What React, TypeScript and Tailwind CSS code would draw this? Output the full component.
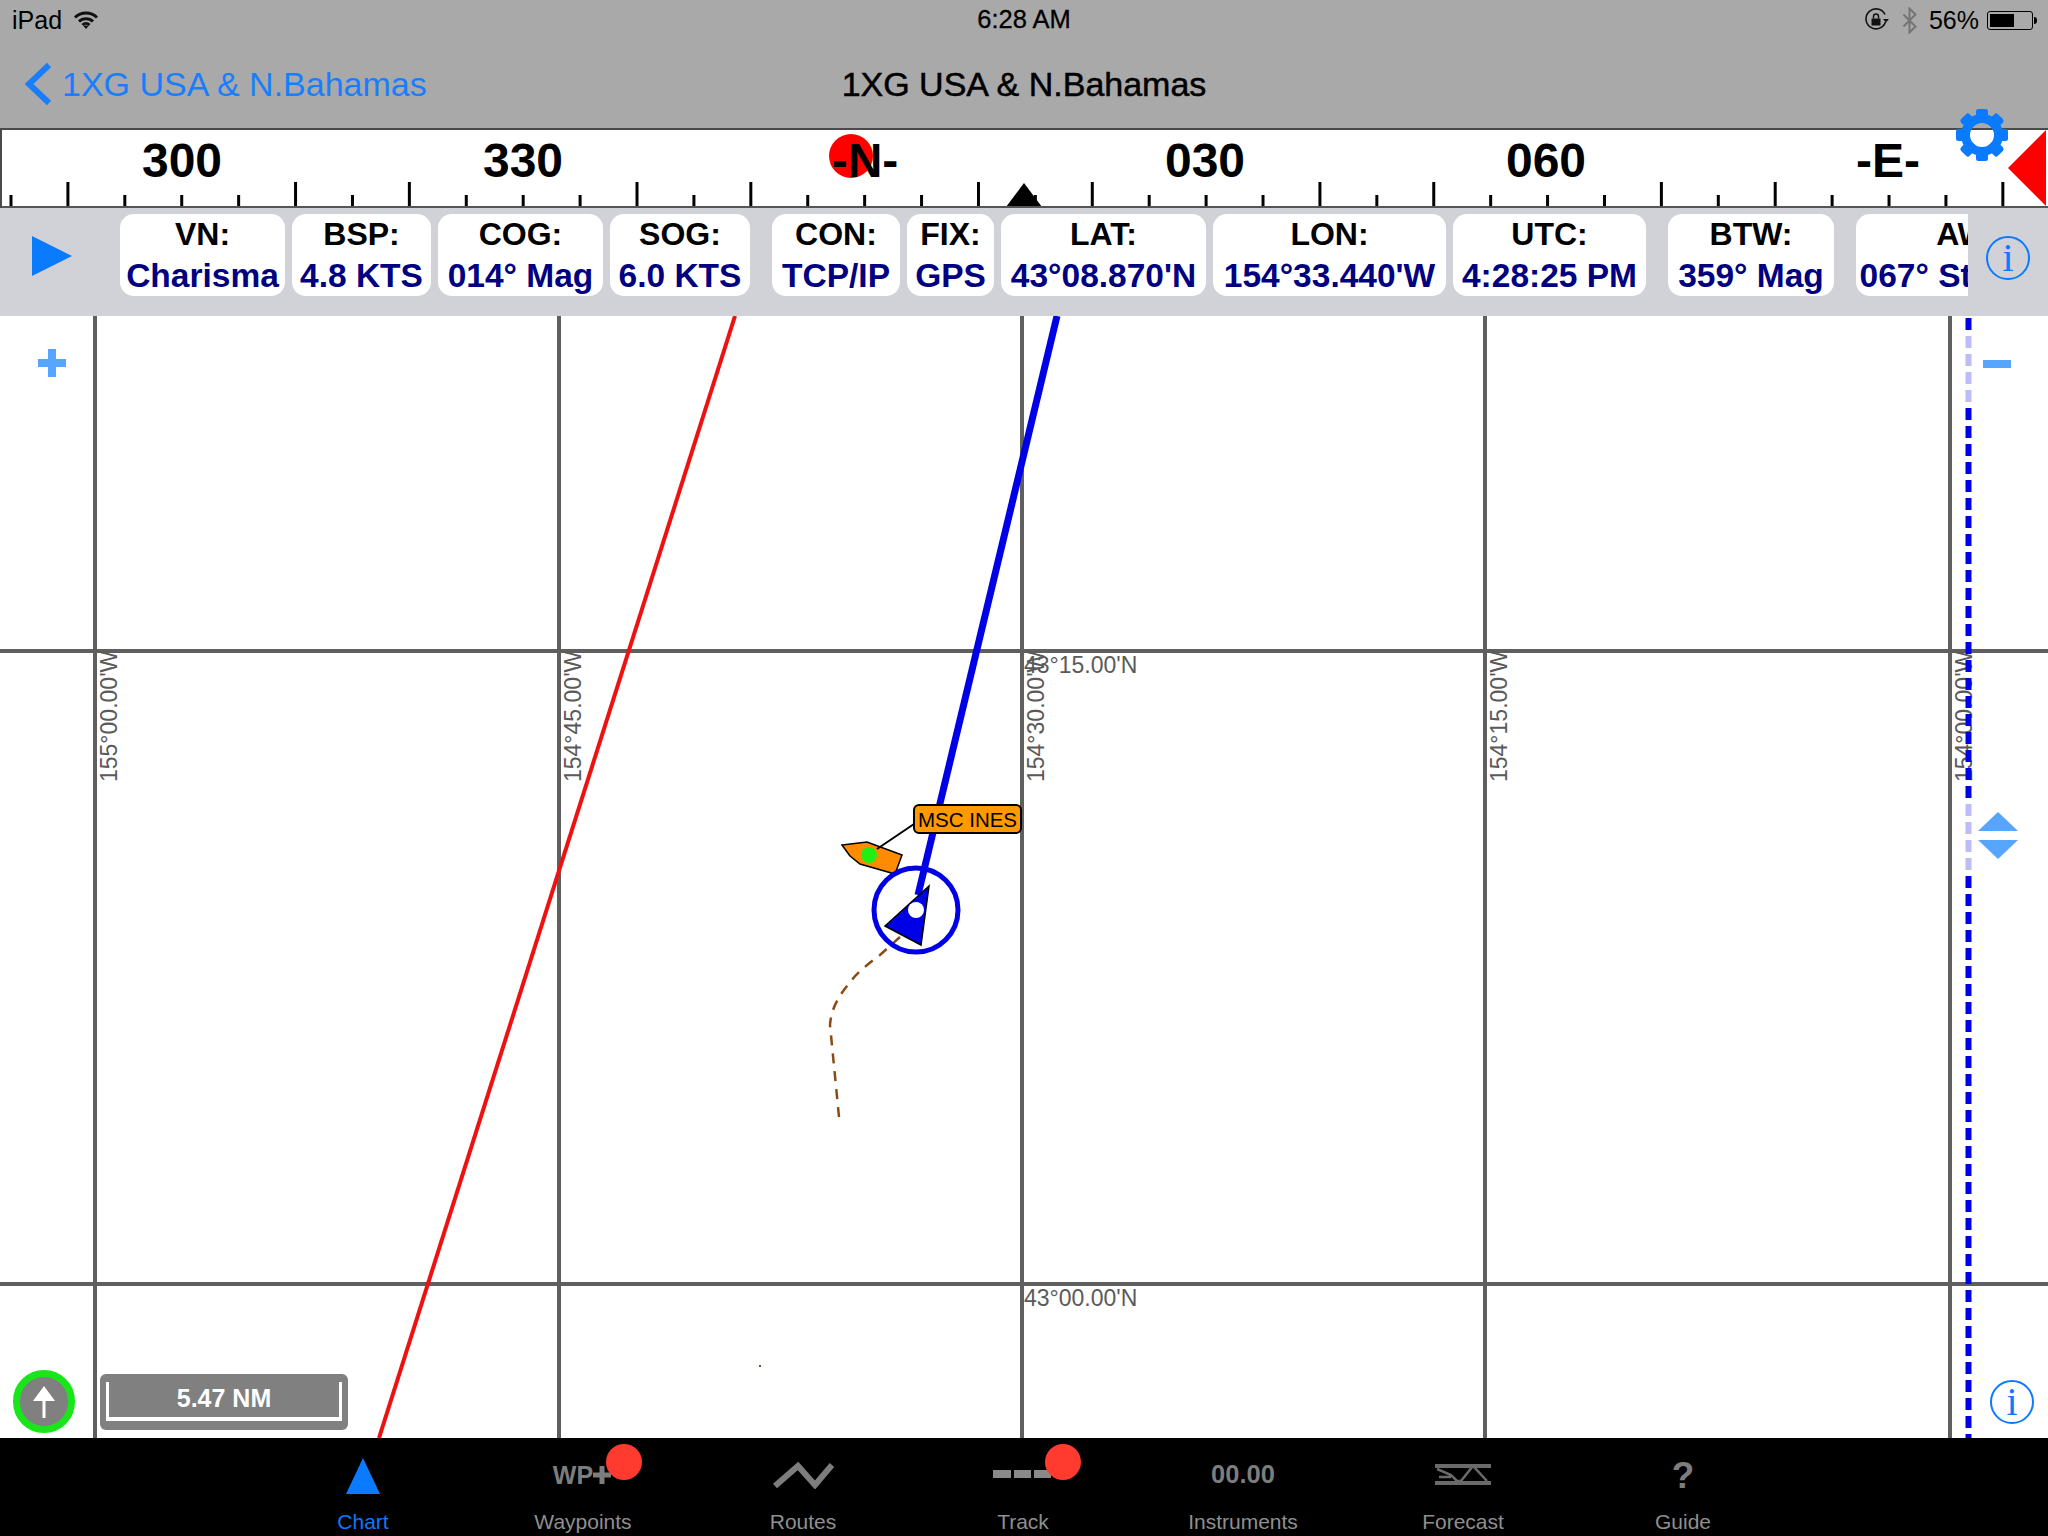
import React from "react";

const instrumentsA = [
  { label: "VN:", value: "Charisma", width: "w-[165px]" },
  { label: "BSP:", value: "4.8 KTS", width: "w-[139px]" },
  { label: "COG:", value: "014° Mag", width: "w-[165px]" },
  { label: "SOG:", value: "6.0 KTS", width: "w-[140px]" },
];

const instrumentsB = [
  { label: "CON:", value: "TCP/IP", width: "w-[128px]" },
  { label: "FIX:", value: "GPS", width: "w-[87px]" },
  { label: "LAT:", value: "43°08.870'N", width: "w-[205px]" },
  { label: "LON:", value: "154°33.440'W", width: "w-[233px]" },
  { label: "UTC:", value: "4:28:25 PM", width: "w-[193px]" },
];

const Card = ({ label, value, width }: { label: string; value: string; width: string }) => (
  <div className={`${width} shrink-0 h-[82px] rounded-[14px] bg-white text-center leading-[41px] font-bold whitespace-nowrap`}>
    <div className="text-black text-[32px]">{label}</div>
    <div className="text-[#000080] text-[33.5px]">{value}</div>
  </div>
);

const InfoIcon = () => (
  <div className="w-[44px] h-[44px] rounded-full border-2 border-[#0a7aff] flex items-center justify-center text-[#0a7aff] text-[40px] leading-none font-['Liberation_Serif',serif]">
    i
  </div>
);

const Compass = () => {
  const ticks = Array.from({ length: 36 }, (_, k) => k);
  const labels = [
    { text: "300", x: 182 },
    { text: "330", x: 523 },
    { text: "-N-", x: 865 },
    { text: "030", x: 1205 },
    { text: "060", x: 1546 },
    { text: "-E-", x: 1888 },
  ];
  return (
    <svg className="block w-full h-[80px] bg-white" viewBox="0 128 2048 80">
      <circle cx="851" cy="156" r="22" fill="#ff0000" />
      {ticks.map((k) => {
        const long = k % 6 === 1 || k % 6 === 5;
        const x = 11 + 56.91 * k;
        return <line key={k} x1={x} x2={x} y1={long ? 182 : 195} y2="207" stroke="#000" strokeWidth="3" />;
      })}
      {labels.map((l) => (
        <text key={l.text} x={l.x} y="177" textAnchor="middle" fontSize="48" fontWeight="700" fill="#000">
          {l.text}
        </text>
      ))}
      <polygon points="1024,183 1006,207 1042,207" fill="#000" />
      <polygon points="2008,168 2046,130 2046,206" fill="#ff0000" />
      <rect x="0" y="128" width="2048" height="2" fill="#4a4a4a" />
      <rect x="0" y="206" width="2048" height="2" fill="#555555" />
      <rect x="0" y="128" width="2" height="80" fill="#4a4a4a" />
    </svg>
  );
};

const Gear = () => (
  <svg className="absolute left-[1954px] top-[107px]" width="56" height="56" viewBox="-28 -28 56 56">
    {[0, 45, 90, 135, 180, 225, 270, 315].map((a) => (
      <rect key={a} x="-6" y="-26" width="12" height="14" rx="2.5" fill="#0a7aff" transform={`rotate(${a})`} />
    ))}
    <circle r="16.5" fill="none" stroke="#0a7aff" strokeWidth="9" />
  </svg>
);

const StatusRight = () => (
  <div className="flex items-center">
    <svg width="26" height="24" viewBox="0 0 26 24" className="mr-[12px]">
      <path d="M21 6.5A10 10 0 1 0 21.5 14" fill="none" stroke="#111" strokeWidth="1.6" />
      <path d="M19 11l3 3.5 3-3.5z" fill="#111" />
      <rect x="7.5" y="10.5" width="9" height="7" fill="#111" />
      <path d="M9.5 10.5V8.5a2.5 2.5 0 0 1 5 0v2" fill="none" stroke="#111" strokeWidth="1.5" />
    </svg>
    <svg width="16" height="27" viewBox="0 0 16 27" className="mr-[11px]">
      <path d="M1.5 7.5l12 12-6 6V1.500l6 6-12 12" fill="none" stroke="#757575" strokeWidth="2" />
    </svg>
    <span className="text-[25px] leading-none text-black mr-[8px]">56%</span>
    <div className="relative w-[46px] h-[19px] rounded-[3px] border border-black p-[2px]">
      <div className="w-[24px] h-full bg-black" />
    </div>
    <div className="ml-[1px] w-[3px] h-[7px] bg-black rounded-r-sm" />
  </div>
);

const ChartDrawing = () => {
  const grid = [95, 559, 1022, 1485, 1950];
  const vLabels = [
    { x: 117, t: "155°00.00'W" },
    { x: 581, t: "154°45.00'W" },
    { x: 1044, t: "154°30.00'W" },
    { x: 1507, t: "154°15.00'W" },
    { x: 1972, t: "154°00.00'W" },
  ];
  const dashes = [
    { y1: 318, y2: 336, c: "#0000e6" },
    { y1: 336, y2: 408, c: "#bcbcf8" },
    { y1: 408, y2: 804, c: "#0000e6" },
    { y1: 804, y2: 876, c: "#bcbcf8" },
    { y1: 876, y2: 1438, c: "#0000e6" },
  ];
  return (
    <svg className="absolute inset-0" width="2048" height="1122" viewBox="0 316 2048 1122">
      {grid.map((x) => (
        <line key={x} x1={x} x2={x} y1="316" y2="1438" stroke="#5f5f5f" strokeWidth="4" />
      ))}
      <line x1="0" x2="2048" y1="651" y2="651" stroke="#5f5f5f" strokeWidth="4" />
      <line x1="0" x2="2048" y1="1284" y2="1284" stroke="#5f5f5f" strokeWidth="4" />

      {vLabels.map((l) => (
        <text key={l.x} transform={`translate(${l.x} 782) rotate(-90)`} fontSize="23" fill="#5a5a5a">
          {l.t}
        </text>
      ))}
      <text x="1024" y="673" fontSize="23" fill="#5a5a5a">43°15.00'N</text>
      <text x="1024" y="1306" fontSize="23" fill="#5a5a5a">43°00.00'N</text>

      <line x1="735" y1="316" x2="379" y2="1438" stroke="#ee1111" strokeWidth="4" />
      <line x1="1057" y1="316" x2="918" y2="895" stroke="#0000e6" strokeWidth="7" />
      {dashes.map((d) => (
        <line key={d.y1} x1="1968.5" x2="1968.5" y1={d.y1} y2={d.y2} stroke={d.c} strokeWidth="6" strokeDasharray="12 6" />
      ))}

      <path
        d="M900 937L880 955C868 964 858 972 851 981C840 994 831 1008 830 1025L839 1117"
        fill="none"
        stroke="#8b4a14"
        strokeWidth="2.5"
        strokeDasharray="10 8"
      />
      <rect x="759" y="1365" width="2" height="2" fill="#8b4a14" />

      <polygon points="842,845 867,842 902,855 895,874 860,864 850,856" fill="#ff8c00" stroke="#000" strokeWidth="1.500" />
      <circle cx="869" cy="855" r="8" fill="#22ee11" />
      <line x1="877" y1="849" x2="914" y2="824" stroke="#000" strokeWidth="2" />
      <rect x="914" y="805" width="107" height="28" rx="5" fill="#ff9900" stroke="#000" strokeWidth="2" />
      <text x="967.5" y="827" textAnchor="middle" fontSize="20.5" fill="#000">MSC INES</text>

      <circle cx="916" cy="910" r="42" fill="none" stroke="#0000e6" strokeWidth="5" />
      <polygon points="929,886 885,926 921,945" fill="#0000e6" stroke="#000" strokeWidth="1.500" />
      <circle cx="916" cy="910" r="8" fill="#fff" />
    </svg>
  );
};

const ChartOverlays = () => (
  <>
    <svg className="absolute left-[38px] top-[33px]" width="28" height="28" viewBox="0 0 28 28">
      <path d="M10 0h8v10h10v8H18v10h-8V18H0v-8h10z" fill="#56a5ff" />
    </svg>
    <div className="absolute left-[1983px] top-[44px] w-[28px] h-[8px] bg-[#56a5ff]" />
    <svg className="absolute left-[1978px] top-[496px]" width="40" height="47" viewBox="0 0 40 47">
      <polygon points="20,0 40,19 0,19" fill="#56a5ff" />
      <polygon points="0,28 40,28 20,47" fill="#56a5ff" />
    </svg>
    <div className="absolute left-[1990px] top-[1064px]">
      <InfoIcon />
    </div>
    <div className="absolute left-[13px] top-[1054px] w-[62px] h-[63px] rounded-full border-[7px] border-[#19e619] bg-[#808080] flex items-center justify-center">
      <svg width="24" height="32" viewBox="0 0 24 32">
        <polygon points="12,0 23,15 1,15" fill="#fff" />
        <rect x="10.500" y="12" width="3" height="20" fill="#fff" />
      </svg>
    </div>
    <div className="absolute left-[100px] top-[1058px] w-[248px] h-[56px] rounded-[6px] bg-[#808080] pt-[8px] px-[6px]">
      <div className="h-[39px] border-x-[3px] border-b-[4px] border-white flex items-center justify-center text-white text-[25px] font-bold pb-[2px]">
        5.47 NM
      </div>
    </div>
  </>
);

const Tab = ({
  label,
  active = false,
  children,
}: {
  label: string;
  active?: boolean;
  children: React.ReactNode;
}) => (
  <div className="relative w-[220px] flex flex-col items-center">
    <div className="h-[70px] flex items-center justify-center">{children}</div>
    <div className={`text-[21px] leading-[24px] ${active ? "text-[#0a7aff]" : "text-[#8f8f8f]"}`}>{label}</div>
  </div>
);

const TabBar = () => (
  <div className="h-[98px] bg-black flex justify-center pt-[2px] pr-[2px]">
    <Tab label="Chart" active>
      <svg width="34" height="36" viewBox="0 0 34 36" className="mt-[1px]">
        <polygon points="17,0 34,36 0,36" fill="#0a7aff" />
      </svg>
    </Tab>
    <Tab label="Waypoints">
      <div className="flex items-center font-bold text-[25px] leading-none text-[#7d7d7d] mr-[2px]">
        WP
        <svg width="18" height="18" viewBox="0 0 18 18">
          <path d="M6.500 0h5v6.500H18v5h-6.500V18h-5v-6.500H0v-5h6.500z" fill="#7d7d7d" />
        </svg>
      </div>
      <div className="absolute left-[133px] top-[4px] w-[36px] h-[36px] rounded-full bg-[#ff3b30]" />
    </Tab>
    <Tab label="Routes">
      <svg width="62" height="28" viewBox="0 0 62 28">
        <polyline points="3,25 26,5 43,24 60,4" fill="none" stroke="#7d7d7d" strokeWidth="6" />
      </svg>
    </Tab>
    <Tab label="Track">
      <div className="flex gap-[3px] mb-[2px] mr-[2px]">
        <div className="w-[18px] h-[8px] bg-[#8a8a8a]" />
        <div className="w-[17px] h-[8px] bg-[#8a8a8a]" />
        <div className="w-[17px] h-[8px] bg-[#8a8a8a]" />
      </div>
      <div className="absolute left-[132px] top-[4px] w-[36px] h-[36px] rounded-full bg-[#ff3b30]" />
    </Tab>
    <Tab label="Instruments">
      <span className="font-bold text-[25.5px] text-[#7d7d7d] leading-none">00.00</span>
    </Tab>
    <Tab label="Forecast">
      <svg width="56" height="26" viewBox="0 0 56 26">
        <rect x="0" y="2" width="56" height="4" fill="#6a6a6a" />
        <rect x="0" y="19" width="56" height="4" fill="#6a6a6a" />
        <path d="M2 7l14 6 6 6h4l12-15 14 15M4 15h12" fill="none" stroke="#6a6a6a" strokeWidth="2.500" />
      </svg>
    </Tab>
    <Tab label="Guide">
      <span className="font-bold text-[37px] text-[#7d7d7d] leading-none">?</span>
    </Tab>
  </div>
);

export default function App() {
  return (
    <div className="relative w-[2048px] h-[1536px] overflow-hidden flex flex-col bg-white font-['Liberation_Sans',Arial,sans-serif]">
      <header className="h-[128px] bg-[#a9a9a9] flex flex-col">
        <div className="h-[40px] relative flex items-center justify-between px-[12px] pr-[11px]">
          <div className="flex items-center gap-[11px]">
            <span className="text-[25px] leading-none text-black">iPad</span>
            <svg width="26" height="18" viewBox="0 0 26 18">
              <path d="M2 6.500a15.500 15.500 0 0 1 22 0M6 10.500a10 10 0 0 1 14 0M9.500 14a5 5 0 0 1 7 0" fill="none" stroke="#111" strokeWidth="3" />
              <polygon points="13,18 10,14.500 16,14.500" fill="#111" />
            </svg>
          </div>
          <span className="absolute left-0 right-0 text-center text-[25.500px] leading-none text-black [-webkit-text-stroke:0.3px_black]">6:28 AM</span>
          <StatusRight />
        </div>
        <div className="relative flex-1 flex items-center">
          <svg width="28" height="44" viewBox="0 0 28 44" className="ml-[24px] mr-[10px]">
            <polyline points="25,3 5,22 25,41" fill="none" stroke="#1a7efb" strokeWidth="6" />
          </svg>
          <span className="text-[34px] leading-none text-[#1a7efb]">1XG USA &amp; N.Bahamas</span>
          <span className="absolute left-0 right-0 text-center text-[34px] leading-none text-black [-webkit-text-stroke:0.5px_black]">
            1XG USA &amp; N.Bahamas
          </span>
        </div>
      </header>

      <Compass />

      <div className="h-[108px] bg-[#d0d2d8] flex">
        <div className="w-[120px] shrink-0 pt-[28px] pl-[32px]">
          <svg width="40" height="40" viewBox="0 0 40 40">
            <polygon points="0,0 40,20 0,40" fill="#0a7aff" />
          </svg>
        </div>
        <div className="w-[1848px] shrink-0 overflow-hidden flex gap-[22px] pt-[6px]">
          <div className="flex gap-[7px] shrink-0">
            {instrumentsA.map((c) => (
              <Card key={c.label} {...c} />
            ))}
          </div>
          <div className="flex gap-[7px] shrink-0">
            {instrumentsB.map((c) => (
              <Card key={c.label} {...c} />
            ))}
          </div>
          <Card label="BTW:" value="359° Mag" width="w-[166px]" />
          <Card label="AWA:" value="067° Starboard" width="w-[244px]" />
        </div>
        <div className="flex-1 flex items-center justify-center pb-[8px]">
          <InfoIcon />
        </div>
      </div>

      <main className="relative h-[1122px] bg-white overflow-hidden">
        <ChartDrawing />
        <ChartOverlays />
      </main>

      <TabBar />
      <Gear />
    </div>
  );
}
